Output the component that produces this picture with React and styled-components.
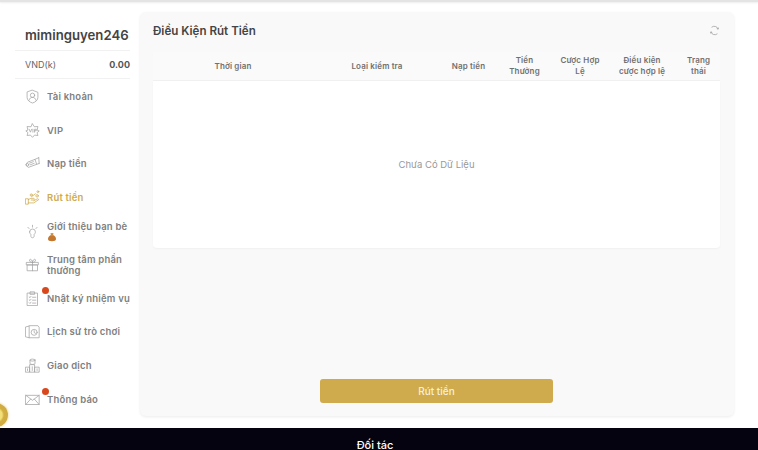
import React from "react";
import styled, { createGlobalStyle } from "styled-components";

const GlobalStyle = createGlobalStyle`
  html, body {
    margin: 0;
    padding: 0;
    background: #fff;
    font-family: Inter, "Noto Sans", sans-serif;
    overflow: hidden;
  }
`;

const ShieldIcon = () => (
  <svg viewBox="0 0 18 18">
    <path d="M9 1.500 15.500 4v6c0 3.500-3 5.800-6.500 6.800C5.500 15.800 2.500 13.500 2.500 10V4Z" />
    <circle cx="9" cy="7.500" r="2.600" />
    <path d="M4.800 13.500c.6-2.500 2.200-3.400 4.200-3.400s3.600.9 4.200 3.400" />
  </svg>
);

const VipIcon = () => (
  <svg viewBox="0 0 18 18">
    <path d="M9 1 11.200 4.500 15.500 4.200 14.500 8.500 17 9.500 14.500 11.500 15.500 15 11.500 14.500 9 17.200 6.500 14.500 2.500 15 3.500 11.500 1 9.500 3.500 8.500 2.500 4.200 6.800 4.500Z" />
    <path d="M5 7.500 6.500 11 8 7.500M9.500 7.500V11M11.500 11V7.500H13.500V9.300H11.500" />
  </svg>
);

const DepositIcon = () => (
  <svg viewBox="0 0 18 18">
    <path d="M1 10.500 3 7.500 12 4 14 10 4.500 13.500Z" />
    <path d="M12 4 16.500 2M14 10 17 9M16.500 2 17 9M5.500 8.500l4.500-1.700M6.500 10.500l4.500-1.700" />
    <circle cx="3" cy="10.500" r="1.500" />
  </svg>
);

const WithdrawIcon = () => (
  <svg viewBox="0 0 18 18">
    <path d="M1 10.500h3v6.500H1ZM4 11.500l3-1.500h3.500c1 0 1 2-.2 2H7.500M4 15.500h6.500l6-4c-.4-1-1.500-1.200-2.300-.6L10.500 13" />
    <path d="M8 8 12.500 4.500" />
    <circle cx="7.500" cy="6" r="1.300" />
    <circle cx="14.500" cy="7" r="1.500" />
    <circle cx="15.500" cy="2" r="1.100" />
  </svg>
);

const ReferIcon = () => (
  <svg viewBox="0 0 18 18">
    <path d="M5.500 9.500a3.500 3.500 0 1 1 7 0c0 1.600-1 2.300-1.500 3v1.500c0 1.500-.6 2.500-2 2.500s-2-1-2-2.500v-1.500c-.5-.7-1.500-1.400-1.500-3Z" />
    <path d="M9 1.500v2.200M3.500 4l1.400 1.500M14.500 4l-1.400 1.500" />
  </svg>
);

const GiftIcon = () => (
  <svg viewBox="0 0 18 18">
    <path d="M2 6.500h14v3H2ZM3 9.500h12v7H3ZM9 6.500v10" />
    <path d="M9 6.500C7 6.500 5 5.500 5.500 3.500S9 3.500 9 6.500c0-3 3-5 3.500-3S11 6.500 9 6.500Z" />
  </svg>
);

const TaskIcon = () => (
  <svg viewBox="0 0 18 18">
    <path d="M3 2.500h12v15H3Z" />
    <path d="M6.500 1h5v3h-5ZM5 7l1 1 1.200-1.600M5 10.500l1 1 1.200-1.600M5 14l1 1 1.200-1.600M9 7.500h4M9 11h4M9 14.500h4" />
  </svg>
);

const HistoryIcon = () => (
  <svg viewBox="0 0 18 18">
    <path d="M1 3.500 5 2.500V16.500L1 15.500Z" />
    <path d="M5 2h10.500L17 4v12.500H5" />
    <circle cx="11" cy="10" r="3.600" />
    <path d="M11 8v2.200l1.600 1" />
  </svg>
);

const TradeIcon = () => (
  <svg viewBox="0 0 18 18">
    <path d="M1 11h4.500v6H1ZM6 8h5.500v9H6ZM12 11h5v6h-5Z" />
    <ellipse cx="9" cy="2.500" rx="3" ry="1.200" />
    <path d="M6 2.500v4c0 .6 1.300 1.200 3 1.200s3-.6 3-1.200v-4M3 15v-2M8.700 15v-4.500M14.500 15v-2" />
  </svg>
);

const MailIcon = () => (
  <svg viewBox="0 0 18 18">
    <path d="M1 4h16v11H1Z" />
    <path d="M1 4l8 6 8-6M1 15l5.800-6.500M17 15l-5.800-6.500" />
  </svg>
);

const MoneyBag = () => (
  <BagSvg viewBox="0 0 10 10">
    <path d="M3.500 1.200h3L6 3c2 .8 3 2.500 3 4 0 1.500-1.500 2.200-4 2.200S1 8.500 1 7c0-1.500 1-3.200 3-4Z" fill="#c4772f" />
    <path d="M3.800 3h2.400" stroke="#e7b35a" strokeWidth="0.800" />
  </BagSvg>
);

const RefreshIcon = () => (
  <RefreshSvg viewBox="0 0 12 12">
    <path d="M2.800 2.500A4.500 4.500 0 0 1 10 4.500M9.200 9.500A4.500 4.500 0 0 1 2 7.500" />
    <path d="M10.300 2.800 10 4.500 8.500 4M1.700 9.200 2 7.500 3.500 8" />
  </RefreshSvg>
);

const menu = [
  { label: "Tài khoản", icon: <ShieldIcon /> },
  { label: "VIP", icon: <VipIcon /> },
  { label: "Nạp tiền", icon: <DepositIcon /> },
  { label: "Rút tiền", icon: <WithdrawIcon />, active: true },
  { label: "Giới thiệu bạn bè", icon: <ReferIcon />, bag: true },
  { label: "Trung tâm phần thưởng", icon: <GiftIcon /> },
  { label: "Nhật ký nhiệm vụ", icon: <TaskIcon />, dot: true },
  { label: "Lịch sử trò chơi", icon: <HistoryIcon /> },
  { label: "Giao dịch", icon: <TradeIcon /> },
  { label: "Thông báo", icon: <MailIcon />, dot: true },
];

const columns = [
  { label: "Thời gian", pad: 4 },
  { label: "Loại kiểm tra", pad: 4 },
  { label: "Nạp tiền", pad: 4 },
  { label: "Tiền Thưởng", pad: 4 },
  { label: "Cược Hợp Lệ", pad: 5 },
  { label: "Điều kiện cược hợp lệ", pad: 8 },
  { label: "Trạng thái", pad: 4 },
];

export default function App() {
  return (
    <Page>
      <GlobalStyle />
      <TopBar />
      <Main>
        <Sidebar>
          <UserName>miminguyen246</UserName>
          <Balance>
            <span>VND(k)</span>
            <strong>0.00</strong>
          </Balance>
          <Menu>
            {menu.map((item) => (
              <MenuItem key={item.label} $active={item.active}>
                <IconBox $active={item.active}>
                  {item.icon}
                  {item.dot && <Dot />}
                </IconBox>
                <MenuLabel>
                  {item.label}
                  {item.bag && <MoneyBag />}
                </MenuLabel>
              </MenuItem>
            ))}
          </Menu>
        </Sidebar>
        <Panel>
          <PanelHead>
            <PanelTitle>Điều Kiện Rút Tiền</PanelTitle>
            <RefreshIcon />
          </PanelHead>
          <Table>
            <TableHead>
              {columns.map((col) => (
                <HeadCell key={col.label} $pad={col.pad}>
                  {col.label}
                </HeadCell>
              ))}
            </TableHead>
            <TableBody>Chưa Có Dữ Liệu</TableBody>
          </Table>
          <SubmitRow>
            <SubmitButton>Rút tiền</SubmitButton>
          </SubmitRow>
        </Panel>
      </Main>
      <Footer>Đối tác</Footer>
      <FloatCoin />
    </Page>
  );
}

const Page = styled.div`
  position: relative;
  width: 758px;
  height: 450px;
  display: flex;
  flex-direction: column;
  overflow: hidden;
  background: #fff;
`;

const TopBar = styled.div`
  height: 2px;
  flex-shrink: 0;
  background: #e4e4e4;
  box-shadow: 0 1px 2px rgba(0, 0, 0, 0.08);
`;

const Main = styled.div`
  flex: 1;
  display: flex;
  gap: 10px;
  padding: 10px 24px 12px 15px;
  min-height: 0;
`;

const Sidebar = styled.aside`
  width: 115px;
  flex-shrink: 0;
  display: flex;
  flex-direction: column;
`;

const UserName = styled.div`
  height: 39px;
  flex-shrink: 0;
  padding: 7px 0 0 10px;
  box-sizing: border-box;
  display: flex;
  align-items: center;
  font-size: 13.2px;
  font-weight: 600;
  color: #444;
  border-bottom: 1px solid #f1f1f1;
  white-space: nowrap;
`;

const Balance = styled.div`
  height: 28px;
  flex-shrink: 0;
  padding: 0 0 0 10px;
  box-sizing: border-box;
  display: flex;
  align-items: center;
  justify-content: space-between;
  font-size: 9px;
  color: #666;
  border-bottom: 1px solid #f1f1f1;

  strong {
    font-weight: 700;
    color: #555;
  }
`;

const Menu = styled.nav`
  display: flex;
  flex-direction: column;
  padding: 1px 0 0 10px;
`;

const MenuItem = styled.div`
  height: 33.6px;
  flex-shrink: 0;
  display: flex;
  align-items: center;
  gap: 7px;
  color: ${(p) => (p.$active ? "#cfab4d" : "#808080")};
`;

const IconBox = styled.div`
  position: relative;
  width: 15px;
  height: 15px;
  flex-shrink: 0;

  svg {
    display: block;
    width: 15px;
    height: 15px;
    fill: none;
    stroke: ${(p) => (p.$active ? "#cfab4d" : "#a3a3a3")};
    stroke-width: 0.9;
    stroke-linejoin: round;
    stroke-linecap: round;
  }
`;

const Dot = styled.span`
  position: absolute;
  top: -4px;
  right: -9px;
  width: 7px;
  height: 7px;
  border-radius: 50%;
  background: #d9481c;
`;

const MenuLabel = styled.div`
  font-size: 9.5px;
  font-weight: 600;
  line-height: 11px;
  letter-spacing: 0.2px;
  white-space: normal;
`;

const BagSvg = styled.svg`
  display: block;
  width: 10px;
  height: 10px;
`;

const Panel = styled.section`
  flex: 1;
  display: flex;
  flex-direction: column;
  padding: 0 14px 13px 13px;
  background: #f9f9f9;
  border-radius: 6px;
  box-shadow: 0 1px 3px rgba(0, 0, 0, 0.08);
`;

const PanelHead = styled.div`
  height: 40px;
  flex-shrink: 0;
  box-sizing: border-box;
  padding-bottom: 3px;
  display: flex;
  align-items: center;
  justify-content: space-between;
`;

const PanelTitle = styled.h2`
  margin: 0;
  font-size: 11.6px;
  font-weight: 600;
  color: #444;
`;

const RefreshSvg = styled.svg`
  width: 11px;
  height: 11px;
  fill: none;
  stroke: #9a9a9a;
  stroke-width: 0.8;
`;

const Table = styled.div`
  display: flex;
  flex-direction: column;
`;

const TableHead = styled.div`
  height: 29px;
  display: grid;
  grid-template-columns: 160px 128px 55px 57px 54px 70px 43px;
  align-items: center;
  background: #fafafa;
  border-bottom: 1px solid #f0f0f0;
  box-sizing: border-box;
`;

const HeadCell = styled.div`
  padding: 0 ${(p) => p.$pad}px;
  font-size: 8px;
  font-weight: 600;
  line-height: 11px;
  letter-spacing: 0.15px;
  text-align: center;
  color: #707070;
`;

const TableBody = styled.div`
  height: 167px;
  display: flex;
  align-items: center;
  justify-content: center;
  background: #fff;
  border-radius: 0 0 4px 4px;
  box-shadow: 0 1px 2px rgba(0, 0, 0, 0.04);
  font-size: 9.5px;
  color: #999;
`;

const SubmitRow = styled.div`
  flex: 1;
  display: flex;
  align-items: flex-end;
  justify-content: center;
`;

const SubmitButton = styled.button`
  width: 233px;
  height: 24px;
  border: 0;
  border-radius: 3px;
  background: #cfab4d;
  color: #f7efd9;
  font-family: inherit;
  font-size: 10px;
  font-weight: 500;
`;

const Footer = styled.footer`
  height: 22px;
  flex-shrink: 0;
  box-sizing: border-box;
  padding: 13px 8px 0 0;
  background: #05030f;
  color: #fff;
  font-size: 11px;
  font-weight: 500;
  line-height: 9px;
  text-align: center;
`;

// the coin is half off the page and only shows up to the footer edge
const FloatCoin = styled.div`
  position: absolute;
  left: -16px;
  top: 403px;
  width: 24px;
  height: 24px;
  border-radius: 50%;
  background: radial-gradient(circle, #f3df78 0 6px, #d2ae42 8px, #c9a63d 100%);
  box-shadow: 0 0 3px rgba(220, 184, 78, 0.7);
`;
